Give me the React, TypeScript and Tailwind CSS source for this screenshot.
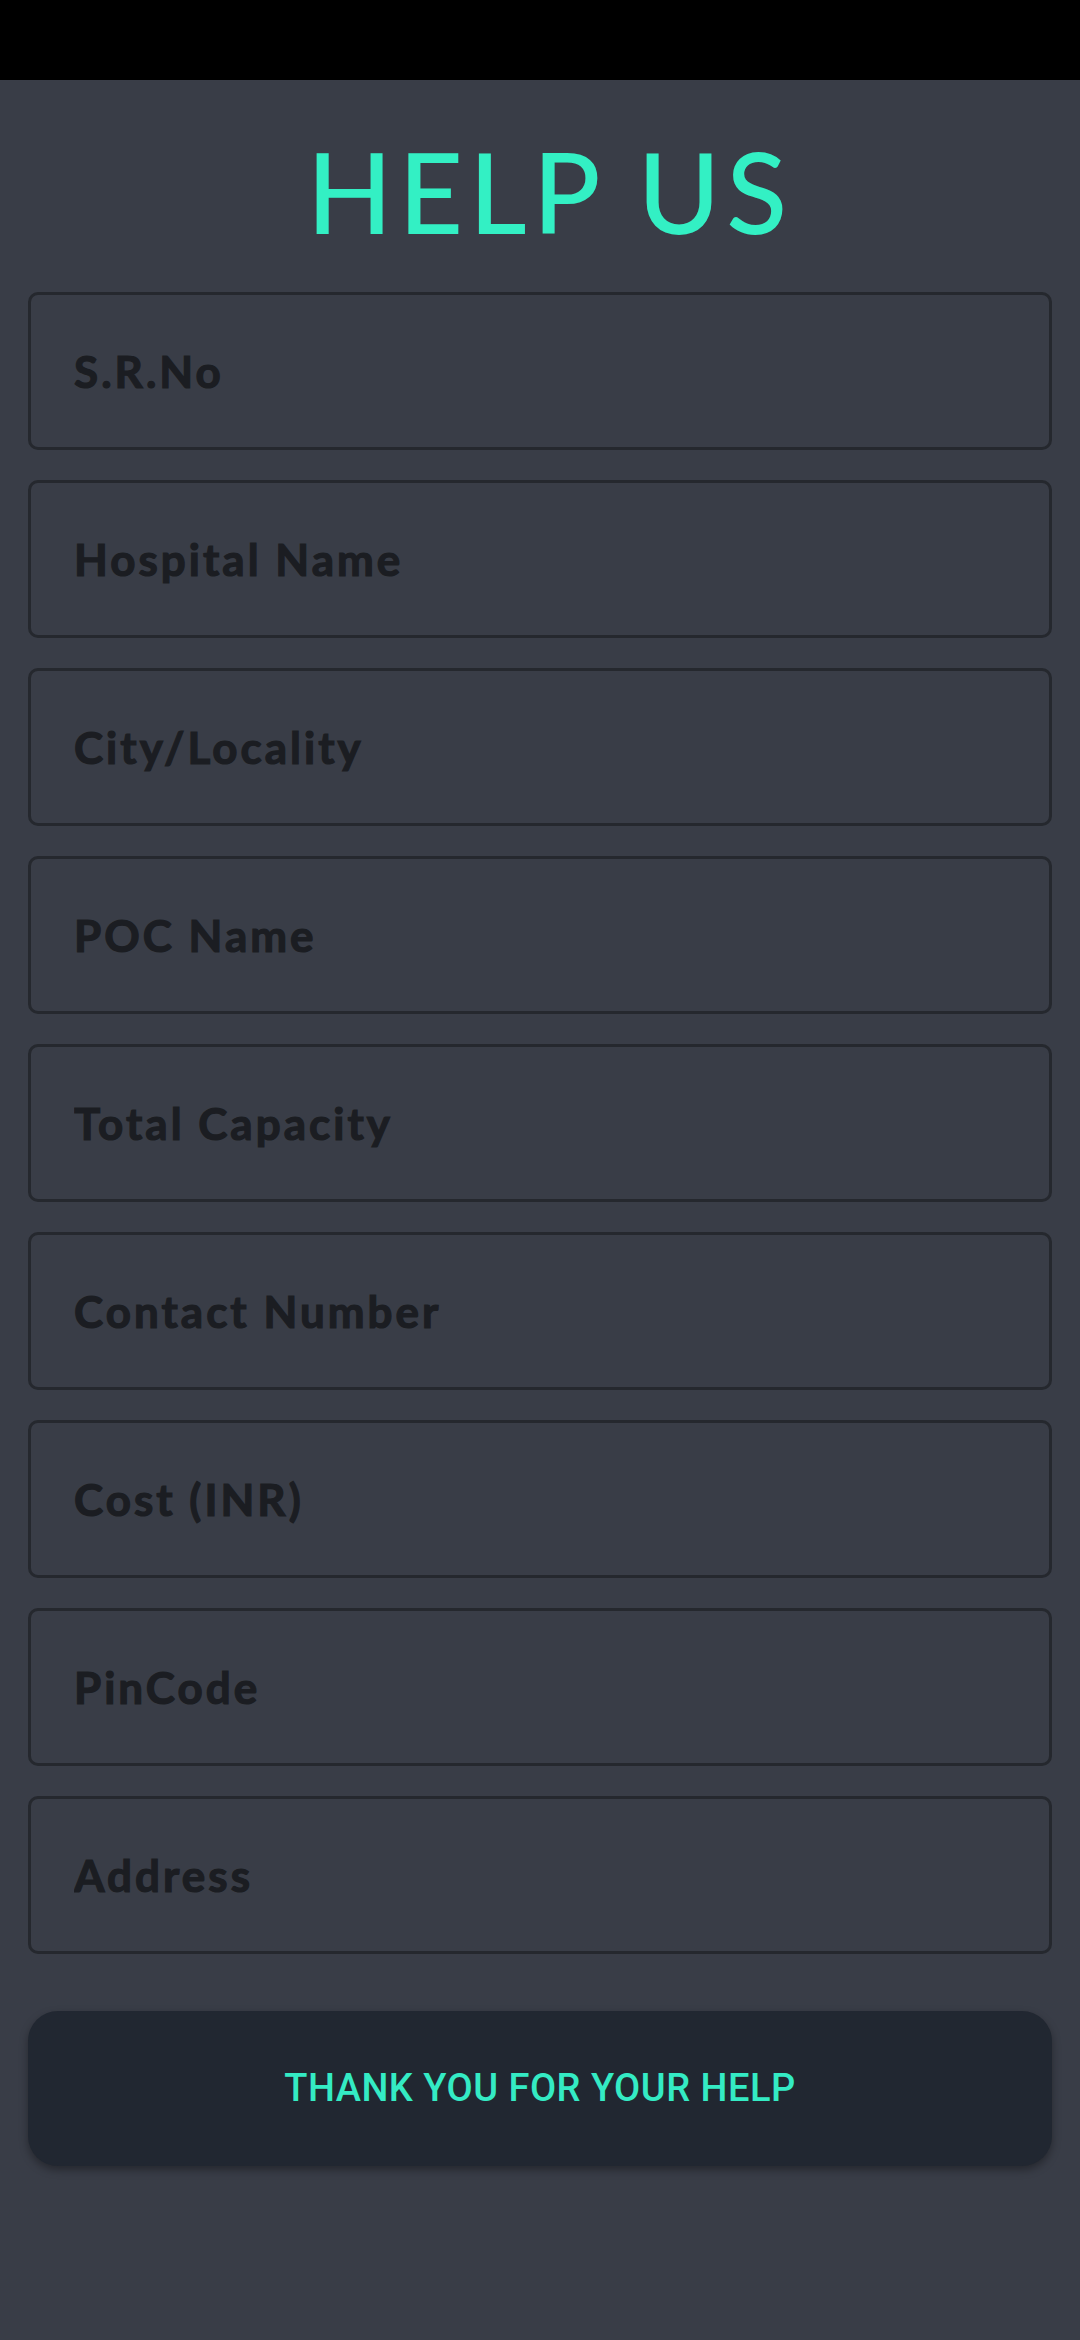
import React from 'react';

const FIELDS = [
  'S.R.No',
  'Hospital Name',
  'City/Locality',
  'POC Name',
  'Total Capacity',
  'Contact Number',
  'Cost (INR)',
  'PinCode',
  'Address',
];

export default function App() {
  return (
    <div className="min-h-[2340px] w-[1080px] bg-[#393d47] font-['Lato',sans-serif]">
      {/* status bar */}
      <div className="h-[80px] bg-black" />

      {/* Title */}
      <div className="flex h-[212px] items-center justify-center pt-[10px] pl-[20px]">
        <h1 className="text-[112px] leading-none font-medium text-[#33f0c4] tracking-[6px]">HELP US</h1>
      </div>

      {/* Form */}
      <div className="flex flex-col gap-[30px] px-[28px]">
        {FIELDS.map((f) => (
          <input
            key={f}
            placeholder={f}
            className="h-[158px] w-full rounded-[10px] border-[3px] border-[#25282e] bg-[#393d47] pl-[43px] text-[44px] font-bold tracking-[3px] text-[#e5e7eb] placeholder:text-[#1b1d22] placeholder:[-webkit-text-stroke:1.2px_#1b1d22] outline-none"
          />
        ))}
      </div>

      <div className="px-[28px] pt-[57px]">
        <button className="flex h-[155px] w-full items-center justify-center rounded-[30px] bg-[#212731] shadow-[0_4px_8px_rgba(0,0,0,0.35)]">
          <span className="font-['Roboto',sans-serif] text-[38px] font-medium tracking-[0.5px] text-[#34ebc4]">THANK YOU FOR YOUR HELP</span>
        </button>
      </div>
    </div>
  );
}
